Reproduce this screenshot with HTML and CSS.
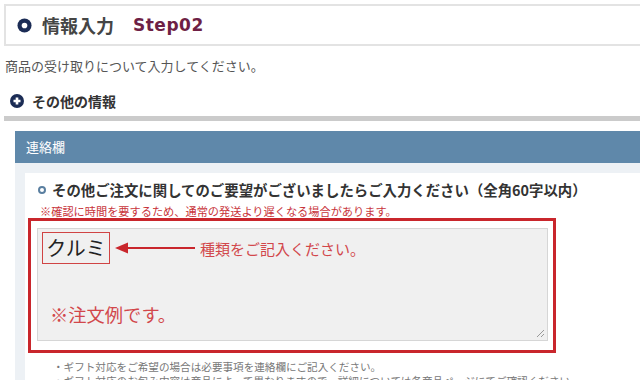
FILE: index.html
```html
<!DOCTYPE html>
<html lang="ja">
<head>
    <meta charset="UTF-8">
    <title>情報入力 Step02</title>
    <link rel="stylesheet" href="styles.css">
</head>
<body>

<main class="page">

    <header class="step-head">
        <svg class="step-icon" width="15" height="15" viewBox="0 0 16 16">
            <circle cx="8" cy="8" r="7.5" fill="#1b2c55"/>
            <circle cx="8" cy="8" r="3" fill="#fff"/>
        </svg>
        <h1 class="step-title">情報入力</h1>
        <span class="step-no">Step02</span>
    </header>

    <p class="lead">商品の受け取りについて入力してください。</p>

    <h2 class="sub-head">
        <svg class="sub-icon" width="14" height="14" viewBox="0 0 16 16">
            <circle cx="8" cy="8" r="8" fill="#1b2c55"/>
            <path d="M8 4v8M4 8h8" stroke="#fff" stroke-width="3"/>
        </svg>
        その他の情報
    </h2>

    <section class="panel">
        <div class="panel-head">連絡欄</div>
        <div class="panel-body">
            <div class="panel-inner">
                <p class="question">
                    <span class="dot"></span>
                    その他ご注文に関してのご要望がございましたらご入力ください（全角60字以内）
                </p>
                <p class="warn">※確認に時間を要するため、通常の発送より遅くなる場合があります。</p>

                <div class="mark">
                    <div class="memo">
                        <div class="memo-row">
                            <span class="sample">クルミ</span>
                            <svg class="arrow" width="80" height="12" viewBox="0 0 80 12">
                                <path d="M0 6 L13 0.5 L13 11.5 Z" fill="#c9262c"/>
                                <path d="M12 6 H80" stroke="#c9262c" stroke-width="2"/>
                            </svg>
                            <span class="hint">種類をご記入ください。</span>
                        </div>
                        <p class="example">※注文例です。</p>
                        <svg class="grip" width="9" height="9" viewBox="0 0 9 9">
                            <path d="M8 1 L1 8 M8 5 L5 8" stroke="#999" stroke-width="1"/>
                        </svg>
                    </div>
                </div>

                <ul class="notes">
                    <li>・ギフト対応をご希望の場合は必要事項を連絡欄にご記入ください。</li>
                    <li>・ギフト対応のお包み内容は商品によって異なりますので、詳細については各商品ページにてご確認ください。</li>
                </ul>
            </div>
        </div>
    </section>

</main>

</body>
</html>
```

FILE: styles.css
```css
html, body {
    margin: 0;
    overflow: hidden;
    background: #fff;
}

body {
    padding: 4px 0 0 4px;
    font-family: "Noto Sans CJK JP", "DejaVu Sans", sans-serif;
    color: #333;
}

.page {
    width: 700px;
}

/* step header */
.step-head {
    display: flex;
    align-items: center;
    height: 38px;
    border: 2px solid #e3e3e3;
    padding-left: 11px;
}
.step-icon {
    flex: none;
}
.step-title {
    margin: 0 0 0 10px;
    font-size: 18px;
    font-weight: bold;
    color: #454545;
    line-height: 1;
}
.step-no {
    margin-left: 19px;
    font-family: "DejaVu Sans", sans-serif;
    font-weight: bold;
    font-size: 17px;
    color: #6e1f45;
    letter-spacing: .5px;
}

.lead {
    margin: 11px 0 0 1px;
    font-size: 13px;
    line-height: 18px;
    color: #555;
}

.sub-head {
    display: flex;
    align-items: center;
    gap: 8px;
    margin: 17px 0 0;
    padding: 0 0 6px 6px;
    font-size: 14px;
    line-height: 18px;
    font-weight: bold;
    color: #333;
    border-bottom: 5px solid #cbcbcb;
}

/* 連絡欄 */
.panel {
    margin: 10px 0 0 11px;
}
.panel-head {
    height: 32px;
    line-height: 32px;
    padding-left: 11px;
    background: #5f88aa;
    color: #fff;
    font-size: 13px;
}
.panel-body {
    background: #edf1f5;
    padding: 10px 0 0 10px;
}
.panel-inner {
    background: #fff;
    padding: 8px 0 20px 3px;
}

.question {
    display: flex;
    align-items: center;
    margin: 0 0 0 10px;
    font-size: 14.4px;
    line-height: 18px;
    font-weight: bold;
    color: #333;
}
.dot {
    width: 4px;
    height: 4px;
    border: 2px solid #5a7fa0;
    border-radius: 50%;
    margin-right: 6px;
}
.warn {
    margin: 5px 0 0 12px;
    font-size: 11.2px;
    line-height: 14px;
    color: #c8343a;
}

.mark {
    width: 511px;
    margin-top: 0;
    border: 3px solid #c9262c;
    padding: 7px 5px 9px 6px;
}
.memo {
    position: relative;
    height: 108px;
    background: #f0f0f0;
    border: 1px solid #d6d6d6;
    padding: 3px 0 0 4px;
}
.memo-row {
    display: flex;
    align-items: center;
}
.sample {
    width: 66px;
    height: 30px;
    border: 1px solid #d04444;
    text-align: center;
    font-size: 20px;
    line-height: 30px;
    color: #222;
}
.arrow {
    margin-left: 5px;
}
.hint {
    margin-left: 5px;
    font-size: 15px;
    color: #d2474b;
}
.example {
    margin: 38px 0 0 8px;
    font-size: 18.3px;
    line-height: 24px;
    color: #d2474b;
}
.grip {
    position: absolute;
    right: 2px;
    bottom: 2px;
}

.notes {
    list-style: none;
    margin: 7px 0 0 25px;
    padding: 0;
    font-size: 10.6px;
    line-height: 14px;
    color: #777;
}
```
